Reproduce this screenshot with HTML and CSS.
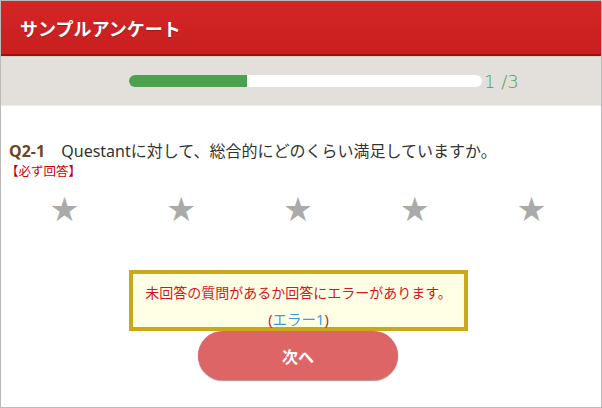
FILE: index.html
```html
<!DOCTYPE html>
<html lang="ja">
<head>
    <meta charset="UTF-8" />
    <meta name="viewport" content="width=device-width, initial-scale=1.0"/>
    <title>サンプルアンケート</title>
    <link rel="stylesheet" href="styles.css">
</head>
<body>
    <div class="page">
        <header>
            <div class="title">サンプルアンケート</div>
        </header>
        <div class="progress">
            <div class="bar"><div class="fill"></div></div>
            <span class="count">1 /3</span>
        </div>
        <main>
            <div class="question">
                <span class="qno">Q2-1</span>
                <span class="qtext">Questantに対して、総合的にどのくらい満足していますか。</span>
            </div>
            <div class="required">【必ず回答】</div>
            <ul class="stars">
                <li>★</li>
                <li>★</li>
                <li>★</li>
                <li>★</li>
                <li>★</li>
            </ul>
            <div class="error">
                <p>未回答の質問があるか回答にエラーがあります。</p>
                <p class="link">(<a href="#">エラー1</a>)</p>
            </div>
            <button class="btn">次へ</button>
        </main>
    </div>
</body>
</html>
```

FILE: styles.css
```css
body {
    margin: 0;
    font-family: "Noto Sans", "Noto Sans CJK JP", sans-serif;
    color: #333;
}

.page {
    height: 408px;
    box-sizing: border-box;
    border: 1px solid #bbb;
    overflow: hidden;
}

header {
    height: 53px;
    display: flex;
    align-items: center;
    padding-left: 19px;
    background: linear-gradient(#d52525, #c81f1f);
    border-bottom: 2px solid #a50d0d;
}

header .title {
    color: #fff;
    font-size: 18px;
    font-weight: bold;
    text-shadow: 0 1px 1px rgba(0, 0, 0, 0.25);
}

.progress {
    height: 50px;
    display: flex;
    align-items: center;
    padding-left: 128px;
    background: #e3e0dc;
    border-top: 1px solid #d4d1cc;
    border-bottom: 1px solid #ececea;
    box-sizing: border-box;
}

.bar {
    width: 353px;
    height: 12px;
    background: #fff;
    border-radius: 6px;
    overflow: hidden;
}

.bar .fill {
    width: 118px;
    height: 100%;
    background: #4ba14e;
}

.count {
    margin-left: 2px;
    font-family: "DejaVu Sans", sans-serif;
    font-weight: 200;
    font-size: 18px;
    color: #4ba14e;
}

main {
    padding: 35px 0 0 8px;
}

.question {
    font-size: 16px;
    line-height: 21px;
}

.qno {
    font-weight: bold;
    color: #6b4526;
    margin-right: 12px;
}

.required {
    color: #c80000;
    font-size: 12.5px;
    line-height: 15px;
    margin: 2px 0 0 -3px;
}

.stars {
    list-style: none;
    margin: 14px 0 0 -3px;
    padding: 0;
    width: 584px;
    display: flex;
}

.stars li {
    flex: 1;
    text-align: center;
    font-size: 27px;
    line-height: 32px;
    color: #aaa;
}

.error {
    margin: 45px 0 0 120px;
    width: 339px;
    box-sizing: border-box;
    border: 4px solid #c9a81a;
    background: #ffffe6;
    text-align: center;
    padding: 9px 0 0;
}

.error p {
    margin: 0;
    font-size: 14px;
    line-height: 20px;
    color: #d0191b;
}

.error p.link {
    margin-top: 8px;
    line-height: 16px;
    font-size: 14.5px;
}

.error a {
    color: #3d9be0;
    text-decoration: none;
}

.btn {
    display: block;
    margin: 0 0 0 189px;
    width: 200px;
    height: 49px;
    border: none;
    border-radius: 25px;
    background: #de6565;
    box-shadow: 0 1px 1px rgba(120, 30, 30, 0.5);
    color: #fff;
    font-family: "Noto Sans CJK JP", sans-serif;
    font-weight: bold;
    font-size: 16px;
}
```
